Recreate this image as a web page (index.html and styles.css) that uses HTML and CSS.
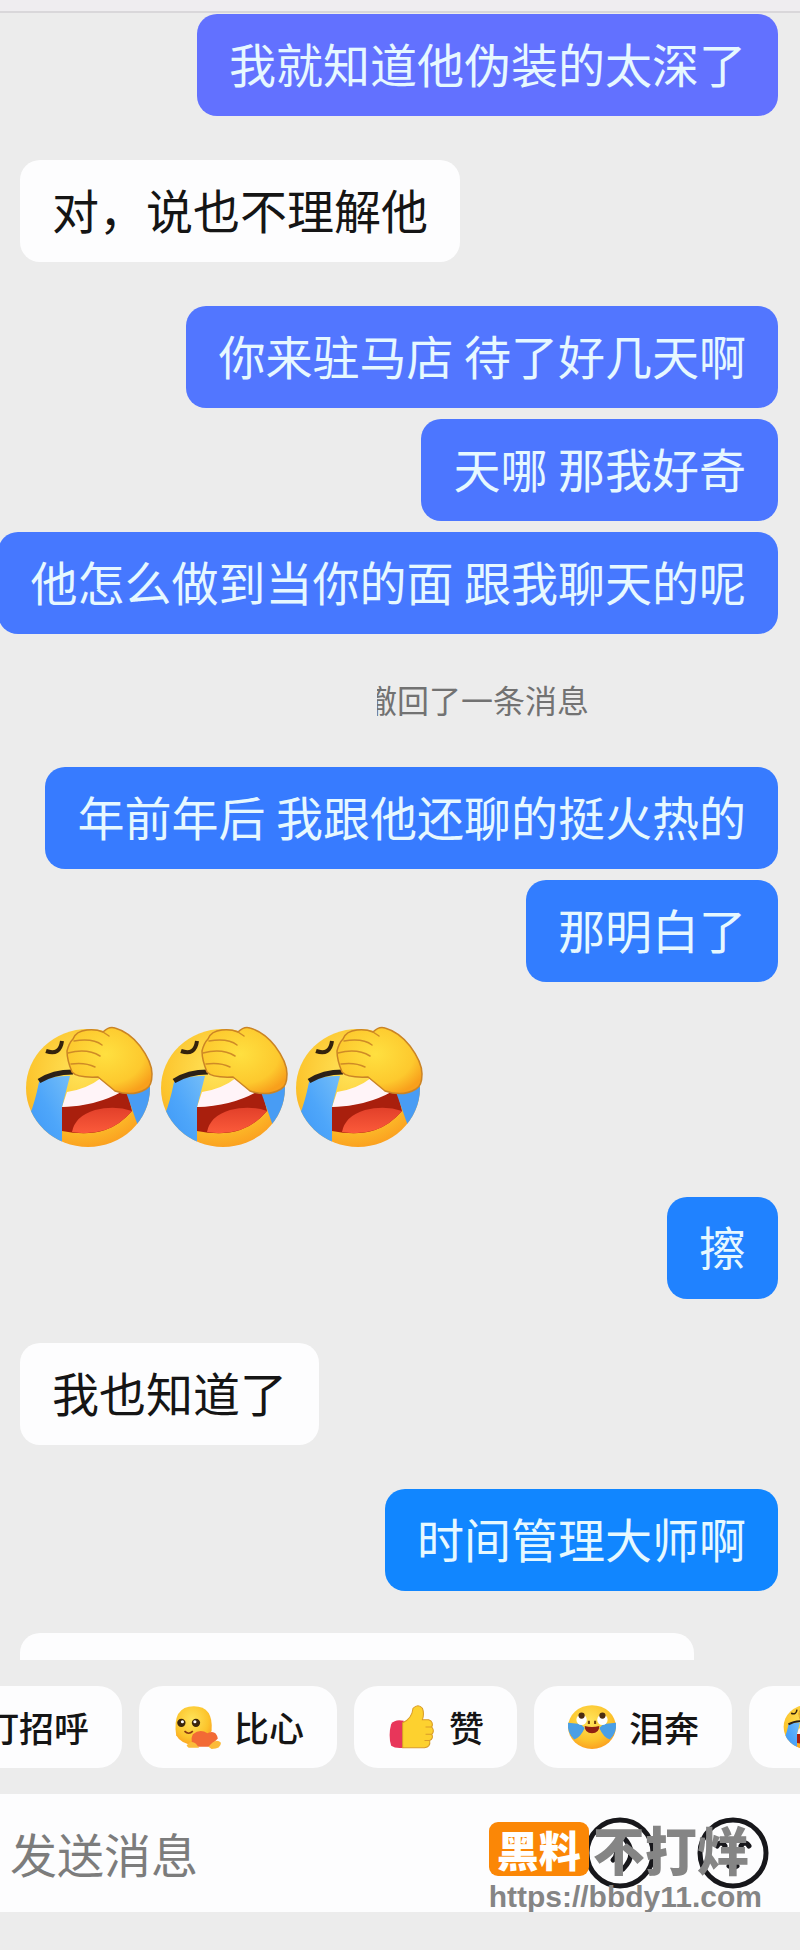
FILE: index.html
```html
<!DOCTYPE html>
<html lang="zh-CN">
<head>
<meta charset="utf-8">
<meta name="viewport" content="width=device-width, initial-scale=1">
<title>聊天</title>
<link rel="stylesheet" href="styles.css">
</head>
<body>
<svg class="defs" aria-hidden="true">
  <defs>
    <radialGradient id="skin" cx="45%" cy="35%" r="70%">
      <stop offset="0" stop-color="#ffe45a"/><stop offset=".65" stop-color="#fcc42c"/><stop offset="1" stop-color="#fb9a1e"/>
    </radialGradient>
    <radialGradient id="palm" cx="45%" cy="40%" r="65%">
      <stop offset="0" stop-color="#ffe040"/><stop offset=".7" stop-color="#fdc92e"/><stop offset="1" stop-color="#f8a01c"/>
    </radialGradient>
    <linearGradient id="tear" x1="0" y1="1" x2="1" y2="0">
      <stop offset="0" stop-color="#3c96f6"/><stop offset=".5" stop-color="#4ea6fa"/><stop offset="1" stop-color="#74bdf8"/>
    </linearGradient>
    <linearGradient id="tongue" x1="0" y1="0" x2="0" y2="1">
      <stop offset="0" stop-color="#e2402a"/><stop offset="1" stop-color="#fb5a3a"/>
    </linearGradient>
    <clipPath id="head"><ellipse cx="63" cy="62" rx="62" ry="59"/></clipPath>
    <symbol id="facepalm" viewBox="0 0 128 124">
      <ellipse cx="63" cy="62" rx="62" ry="59" fill="url(#skin)"/>
      <g clip-path="url(#head)">
        <path d="M37 81Q70 79 95 66L103 68L107 85Q95 99 80 104Q62 110 37 105Z" fill="#a91f0d"/>
        <path d="M42 66Q62 63 76 52L98 65Q72 80 37 81Z" fill="#fff4f8"/>
        <path d="M47 106Q50 90 70 84Q90 79 107 85Q95 99 80 104Q64 109 47 106Z" fill="url(#tongue)"/>
        <path d="M14 56Q28 49 45 50L37 81V124L12 112L5 88Q10 76 14 56Z" fill="url(#tear)"/>
        <path d="M101 66L128 60V90L113 100Z" fill="#489cf4"/>
      </g>
      <path d="M14 55Q28 46 48 46" fill="none" stroke="#2c2118" stroke-width="5"/>
      <path d="M21 25Q35 30 37 15" fill="none" stroke="#35230d" stroke-width="4"/>
      <path d="M47 46Q42 34 42 25Q44 17 48 13Q51 5 62 4Q71 3 78 6Q84 0 90 2Q104 6 115 20Q127 36 127 48Q127 60 121 63Q108 71 90 65Q78 55 73 51Q52 52 47 46Z" fill="url(#palm)" stroke="#cb8425" stroke-width="1.5"/>
      <path d="M49 15Q68 12 77 19M43 27Q62 22 75 30M46 38Q60 36 70 41M78 6L84 10" fill="none" stroke="#cf8b27" stroke-width="1.5" stroke-linecap="round"/>
    </symbol>
  </defs>
</svg>
<div class="app">
  <header class="topbar"></header>
  <main class="chat">
    <p class="bubble mine c1">我就知道他伪装的太深了</p>
    <p class="bubble theirs apart">对，说也不理解他</p>
    <p class="bubble mine c2 apart">你来驻马店 待了好几天啊</p>
    <p class="bubble mine c3">天哪 那我好奇</p>
    <p class="bubble mine c4">他怎么做到当你的面 跟我聊天的呢</p>
    <p class="notice"><span class="masked-name"></span><span class="notice-text">撤回了一条消息</span></p>
    <p class="bubble mine c5">年前年后 我跟他还聊的挺火热的</p>
    <p class="bubble mine c6">那明白了</p>
    <div class="stickers">
      <svg class="sticker"><use href="#facepalm"/></svg>
      <svg class="sticker"><use href="#facepalm"/></svg>
      <svg class="sticker"><use href="#facepalm"/></svg>
    </div>
    <p class="bubble mine c7">擦</p>
    <p class="bubble theirs apart">我也知道了</p>
    <p class="bubble mine c8 apart">时间管理大师啊</p>
    <div class="cut-bubble"></div>
  </main>
  <nav class="chips">
    <button class="chip" type="button">打招呼</button>
    <button class="chip" type="button">
      <svg class="chip-icon" viewBox="0 0 48 44">
        <path d="M4 30Q0 2 21 2Q40 2 38 26L22 40Q8 38 4 30Z" fill="url(#skin)"/>
        <circle cx="9" cy="18" r="4" fill="#3b260c"/><circle cx="23" cy="18" r="4" fill="#3b260c"/>
        <circle cx="10" cy="17" r="1.500" fill="#fff"/><circle cx="22" cy="17" r="1.500" fill="#fff"/>
        <path d="M12 26Q16 30 20 26" fill="none" stroke="#8a3b12" stroke-width="1.500"/>
        <path d="M20 29Q27 23 34 28Q42 24 44 33L36 41H24Q16 37 20 29Z" fill="#f26a35"/>
        <path d="M14 40Q18 34 23 38L26 42H16ZM35 41Q42 32 47 37Q47 43 38 43Z" fill="#fbbb3a"/>
      </svg>
      比心</button>
    <button class="chip" type="button">
      <svg class="chip-icon" viewBox="0 0 48 44">
        <path d="M4 19Q8 14 16 16V42Q8 43 4 40Q1 30 4 19Z" fill="#e8365a"/>
        <path d="M15 18Q24 14 25 4Q30-1 34 4Q36 9 34 15H40Q45 17 43 22Q46 26 43 29Q45 33 41 35Q42 41 36 42H15Z" fill="#fdd12f" stroke="#d99c28"/>
        <path d="M37 22H43M37 29H43M36 35H41" stroke="#d99c28"/>
      </svg>
      赞</button>
    <button class="chip" type="button">
      <svg class="chip-icon" viewBox="0 0 48 44">
        <ellipse cx="24" cy="22" rx="23" ry="21" fill="url(#skin)"/>
        <path d="M13 19L17 23Q13 32 7 34Q0 28 1 18ZM35 19L31 23Q35 32 41 34Q48 28 47 18Z" fill="#4a9fe6"/>
        <circle cx="14" cy="15" r="5" fill="#fff"/><circle cx="34" cy="15" r="5" fill="#fff"/>
        <circle cx="14" cy="11" r="3" fill="#4b2c10"/><circle cx="34" cy="11" r="3" fill="#4b2c10"/>
        <path d="M17 21Q24 23 31 21Q31 28 24 28Q17 28 17 21Z" fill="#8f2011"/>
        <path d="M21 16V19M27 16V19" stroke="#70400f" stroke-width="2"/>
      </svg>
      泪奔</button>
    <button class="chip" type="button" aria-label="捂脸">
      <svg class="chip-icon"><use href="#facepalm"/></svg>
    </button>
  </nav>
  <footer class="composer">
    <input class="field" type="text" placeholder="发送消息" aria-label="发送消息">
    <button class="round" type="button" aria-label="语音">
      <svg viewBox="0 0 74 74"><circle cx="37" cy="37" r="33"/><path d="M40 21Q56 37 40 53M30 30Q37 37 30 44"/></svg>
    </button>
    <button class="round" type="button" aria-label="表情">
      <svg viewBox="0 0 74 74"><circle cx="37" cy="37" r="33"/><path d="M21 30Q25 24 29 30M45 30Q49 24 53 30M33 50Q37 53 41 50"/></svg>
    </button>
    <div class="watermark">
      <div class="brand"><span class="tag">黑料</span><span class="name">不打烊</span></div>
      <div class="url">https://bbdy11.com</div>
    </div>
  </footer>
</div>
</body>
</html>
```
FILE: styles.css
```css
* { box-sizing: border-box; }

body {
  margin: 0;
  background: #ececec;
  font-family: "Noto Sans CJK SC", sans-serif;
  color: #151515;
}

.defs { position: absolute; width: 0; height: 0; }

.app { overflow: hidden; }

.topbar {
  height: 13px;
  background: #efedf0;
  border-bottom: 2px solid #d9d7da;
}

.chat {
  display: flex;
  flex-direction: column;
  gap: 11px;
  padding: 1px 22px 0 20px;
}

.bubble {
  margin: 0;
  padding: 14px 32px 18px;
  border-radius: 20px;
  font-size: 47px;
  line-height: 70px;
  white-space: nowrap;
}

.mine { align-self: flex-end; color: #e6f8ff; }
.theirs { align-self: flex-start; background: #fdfdfe; }
.apart { margin-top: 33px; }

.c1 { background: #6271ff; }
.c2 { background: #5276ff; }
.c3 { background: #4c76ff; }
.c4 { background: #4678ff; }
.c5 { background: #377bff; }
.c6 { background: #327dff; }
.c7 { background: #2082ff; }
.c8 { background: #1186ff; }

.notice {
  display: flex;
  justify-content: center;
  margin: 31px 0 34px;
  font-size: 32px;
  line-height: 46px;
  color: #727272;
}

.masked-name { width: 156px; }
.notice-text { clip-path: inset(0 0 0 12px); }

.stickers {
  display: flex;
  gap: 7px;
  margin: 33px 0 36px 5px;
}

.sticker { width: 128px; height: 124px; }

.cut-bubble {
  width: 674px;
  max-width: 100%;
  height: 27px;
  margin-top: 31px;
  border-radius: 20px 20px 0 0;
  background: #fdfdfe;
}

.chips {
  display: flex;
  gap: 17px;
  margin: 26px 0 26px -49px;
}

.chip {
  display: flex;
  flex: none;
  align-items: center;
  gap: 12px;
  height: 82px;
  padding: 0 33px;
  border: 0;
  border-radius: 24px;
  background: #fdfdfe;
  color: #151515;
  font: 500 35px/50px "Noto Sans CJK SC", sans-serif;
}

.chip-icon { width: 50px; height: 46px; }

.composer {
  position: relative;
  display: flex;
  align-items: center;
  gap: 39px;
  height: 118px;
  padding: 0 30px 0 10px;
  background: #fdfdfe;
}

.field {
  flex: 1;
  min-width: 0;
  padding: 0;
  border: 0;
  background: none;
  font: 47px/70px "Noto Sans CJK SC", sans-serif;
}

.field::placeholder { color: #7c7c7c; opacity: 1; }

.round {
  width: 74px;
  height: 74px;
  padding: 0;
  border: 0;
  background: none;
}

.round svg {
  display: block;
  fill: none;
  stroke: #17171b;
  stroke-width: 5;
  stroke-linecap: round;
}

.watermark {
  position: absolute;
  right: 38px;
  top: 28px;
  color: #858585;
}

.brand { display: flex; align-items: center; gap: 4px; }

.tag {
  padding: 0 8px;
  border-radius: 9px;
  background: #fb8706;
  color: #fff;
  font-size: 42px;
  font-weight: 900;
  line-height: 54px;
}

.name { font-size: 52px; font-weight: 900; line-height: 54px; }

.url {
  margin-top: 4px;
  font: bold 30px/34px "Liberation Sans", sans-serif;
}
```
